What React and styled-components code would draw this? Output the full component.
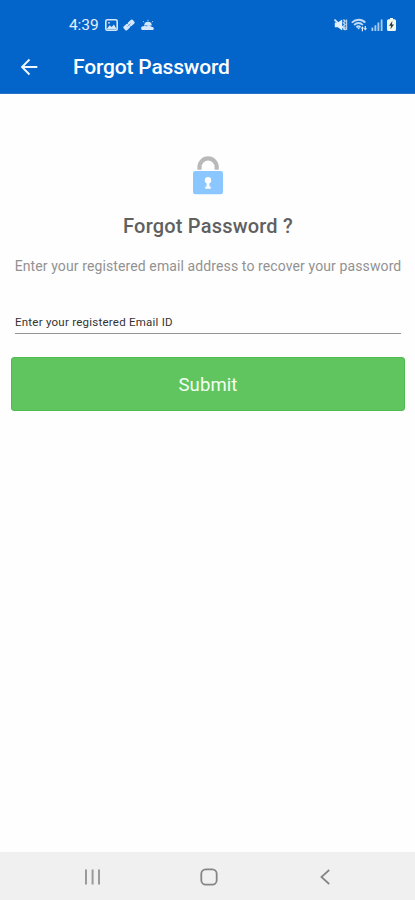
import React from 'react';
import styled, { createGlobalStyle } from 'styled-components';

const GlobalStyle = createGlobalStyle`
  * {
    box-sizing: border-box;
  }

  body {
    margin: 0;
    background-color: #fefefe;
    font-family: Roboto, "Liberation Sans", sans-serif;
  }
`;

const Screen = styled.div`
  display: flex;
  flex-direction: column;
  width: 415px;
  height: 900px;
  overflow: hidden;
`;

const Header = styled.header`
  height: 94px;
  background-color: #0364c9;
  border-bottom: 1px solid #2a72cc;
  color: #fff;
`;

const StatusBar = styled.div`
  display: flex;
  justify-content: space-between;
  align-items: center;
  height: 40px;
  padding: 9px 19px 0 69px;
`;

const StatusGroup = styled.div`
  display: flex;
  align-items: center;
  gap: ${props => props.$gap};
`;

const Clock = styled.span`
  width: 30px;
  font-size: 15.5px;
  line-height: 18px;
  letter-spacing: -0.1px;
  white-space: nowrap;
  color: #e6f0fb;
`;

const Toolbar = styled.div`
  display: flex;
  align-items: center;
  height: 53px;
  padding-left: 20px;
`;

const BackButton = styled.button`
  display: flex;
  width: 53px;
  padding: 0;
  border: 0;
  background: none;
  color: inherit;
`;

const Title = styled.h1`
  margin: 0;
  font-size: 21px;
  font-weight: 500;
  line-height: 26px;
  letter-spacing: -0.18px;
  white-space: nowrap;
`;

const Content = styled.main`
  display: flex;
  flex: 1;
  flex-direction: column;
  align-items: center;
  padding: 62px 10px 0 11px;
`;

const Heading = styled.h2`
  margin: 18px 0 0;
  font-size: 20px;
  font-weight: 500;
  line-height: 26px;
  letter-spacing: 0.2px;
  white-space: nowrap;
  color: #606060;
`;

const Description = styled.p`
  margin: 17px 0 0;
  font-size: 14px;
  font-weight: 400;
  line-height: 20px;
  letter-spacing: 0.11px;
  white-space: nowrap;
  color: #929292;
`;

const EmailInput = styled.input`
  align-self: stretch;
  height: 23px;
  margin: 35px 4px 0;
  padding: 0 0 1px;
  border: 0;
  border-bottom: 1px solid #949494;
  border-radius: 0;
  outline: 0;
  background: none;
  font-family: inherit;
  font-size: 11.5px;
  letter-spacing: 0.24px;

  &::placeholder {
    color: #333;
    opacity: 1;
  }
`;

const SubmitButton = styled.button`
  align-self: stretch;
  height: 54px;
  margin-top: 23px;
  padding: 2px 0 0;
  border: 1px solid #4fbb50;
  border-radius: 3px;
  background-color: #60c55e;
  color: #f4fff3;
  font-family: inherit;
  font-size: 18.5px;
  letter-spacing: 0.1px;
`;

const NavBar = styled.nav`
  display: flex;
  justify-content: space-between;
  align-items: center;
  height: 48px;
  padding: 2px 81px 0 82px;
  background-color: #f0f0f0;
`;

const NavButton = styled.button`
  display: flex;
  padding: 0;
  border: 0;
  background: none;
`;

const PictureIcon = () => (
  <svg width="13" height="12" viewBox="0 0 13 12" fill="none">
    <rect x="0.8" y="0.8" width="11.4" height="10.4" rx="1.5" stroke="#d5e7fa" strokeWidth="1.6" />
    <path d="M1.5 10.2l3.2-4 2 1.8 2.2-2.6 2.8 4.8z" fill="#d5e7fa" />
    <circle cx="4" cy="3.8" r="0.9" fill="#d5e7fa" />
  </svg>
);

const LinkIcon = () => (
  <svg width="12" height="12" viewBox="0 0 12 12">
    <g transform="rotate(-43 6 6)" fill="#d5e7fa">
      <rect x="-0.2" y="3.5" width="6.2" height="5" rx="1.6" />
      <rect x="5.8" y="3.5" width="6.4" height="5" rx="1.6" />
      <path d="M4 6h4" stroke="#5b9ade" strokeWidth="0.9" />
    </g>
  </svg>
);

const WeatherIcon = () => (
  <svg width="14" height="12" viewBox="0 0 14 12" fill="#d5e7fa">
    <path d="M3.2 6.6a3.8 3.8 0 0 1 7.6 0z" />
    <path d="M2 2.2l1.2 1.1M7 0.8v1.4M12 2.2l-1.2 1.1" stroke="#a9cbef" />
    <path d="M1 11a2.1 2.1 0 0 1 1.5-3.8c1-.8 2-.6 2.7.2 1.5-1.9 4.4-1.5 5 .3 2.3-.4 3.3 1.8 2 3.3z" />
  </svg>
);

const MuteIcon = () => (
  <svg width="14" height="14" viewBox="0 0 14 14" fill="none">
    <path d="M0.8 4.5h3L8.2 1.5v11L3.8 9.3h-3z" fill="#e2effc" />
    <path d="M0.5 1.5l11 10.5" stroke="#e2effc" strokeWidth="1.6" />
    <path d="M9.5 1.5l1.5 1.7-1.5 1.6L11 6.5 9.5 8.2 11 9.8l-1.5 1.7M12.5 1.5v10.5" stroke="#b4d2f2" strokeWidth="1.4" />
  </svg>
);

const WifiIcon = () => (
  <svg width="17" height="14" viewBox="0 0 17 14" fill="none">
    <path d="M0.8 4.6c4-3.8 10-3.8 13.5 0M3.1 7c2.7-2.7 6.3-2.7 8.8 0M5.4 9.3c1.2-1.2 2.9-1.2 4.1 0" stroke="#bedaf6" strokeWidth="1.8" />
    <path d="M5.8 9.6h3.6l-1.8 2z" fill="#bedaf6" />
    <path d="M9.8 10.5l1.6-2.2 1.6 2.2h-1v2.8h-1.2v-2.8zM12.6 10.3h1.1V8h1.2v2.3H16l-1.7 2.2z" fill="#e2effc" />
  </svg>
);

const SignalIcon = () => (
  <svg width="13" height="12" viewBox="0 0 13 12">
    <path d="M0.5 8.5h1.8V12H0.5zM3.5 6.3h1.8V12H3.5zM6.5 3.5h1.8V12H6.5zM9.7 0.5h1.8V12H9.7z" fill="#a9cdf2" />
  </svg>
);

const BatteryIcon = () => (
  <svg width="9" height="13" viewBox="0 0 9 13">
    <path d="M3 0h3v1.3h1.5Q9 1.3 9 2.8v8.7Q9 13 7.5 13h-6Q0 13 0 11.5V2.8Q0 1.3 1.5 1.3H3z" fill="#f0f7ef" />
    <path d="M5.4 3L2 7.8h2L3.5 11.2 7 6.4H4.9z" fill="#263b42" />
  </svg>
);

const BackArrowIcon = () => (
  <svg width="18" height="18" viewBox="0 0 18 18" fill="none" stroke="#f0f7ff" strokeWidth="1.9">
    <path d="M17.3 9H2.3M9.5 1.5L2 9l7.5 7.5" />
  </svg>
);

const LockIcon = () => (
  <svg width="30" height="39" viewBox="0 0 30 39">
    <path d="M6.5 13.7v-2.7a8.6 8.6 0 0 1 17.2 0v2.7" fill="none" stroke="#b9b9b9" strokeWidth="4.2" />
    <rect x="0" y="15" width="30" height="23.2" rx="2.3" fill="#8ac6ff" />
    <circle cx="15" cy="24.2" r="3.2" fill="#fff" />
    <path d="M13.6 24h2.8v6.4h1.3v2.3h-5.4v-2.3h1.3z" fill="#fff" />
  </svg>
);

const RecentsIcon = () => (
  <svg width="18" height="16" viewBox="0 0 18 16" stroke="#9a9a9a" strokeWidth="2">
    <path d="M4 0.5v15M10.6 0.5v15M17 0.5v15" />
  </svg>
);

const HomeIcon = () => (
  <svg width="18" height="18" viewBox="0 0 18 18" fill="none">
    <rect x="1.3" y="1.3" width="15.4" height="15.4" rx="4.5" stroke="#858585" strokeWidth="1.8" />
  </svg>
);

const BackIcon = () => (
  <svg width="16" height="16" viewBox="0 0 16 16" fill="none">
    <path d="M11.2 1L3.4 8l7.8 7" stroke="#858585" strokeWidth="1.7" />
  </svg>
);

const App = () => {
  return (
    <>
      <GlobalStyle />
      <Screen>
        <Header>
          <StatusBar>
            <StatusGroup $gap="5.5px">
              <Clock>4:39</Clock>
              <PictureIcon />
              <LinkIcon />
              <WeatherIcon />
            </StatusGroup>
            <StatusGroup $gap="3px">
              <MuteIcon />
              <WifiIcon />
              <SignalIcon />
              <BatteryIcon />
            </StatusGroup>
          </StatusBar>
          <Toolbar>
            <BackButton type="button" aria-label="Back">
              <BackArrowIcon />
            </BackButton>
            <Title>Forgot Password</Title>
          </Toolbar>
        </Header>
        <Content>
          <LockIcon />
          <Heading>Forgot Password ?</Heading>
          <Description>Enter your registered email address to recover your password</Description>
          <EmailInput type="email" placeholder="Enter your registered Email ID" />
          <SubmitButton type="button">Submit</SubmitButton>
        </Content>
        <NavBar>
          <NavButton type="button" aria-label="Recent apps">
            <RecentsIcon />
          </NavButton>
          <NavButton type="button" aria-label="Home">
            <HomeIcon />
          </NavButton>
          <NavButton type="button" aria-label="Back">
            <BackIcon />
          </NavButton>
        </NavBar>
      </Screen>
    </>
  );
};

export default App;
